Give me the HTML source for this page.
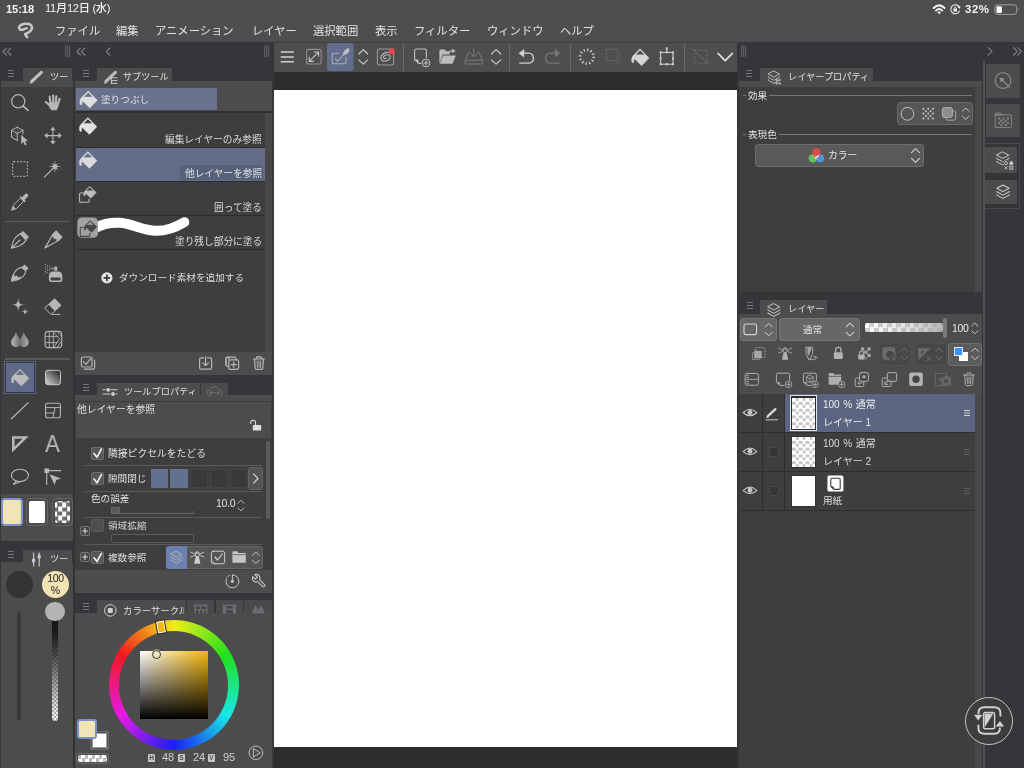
<!DOCTYPE html>
<html lang="ja">
<head>
<meta charset="utf-8">
<title>CLIP STUDIO PAINT</title>
<style>
*{box-sizing:border-box;margin:0;padding:0}
html,body{width:1024px;height:768px;overflow:hidden}
body{background:#35363a;font-family:"Liberation Sans","Noto Sans CJK JP",sans-serif;color:#d6d6d6;font-size:11px;position:relative}
.a{position:absolute}
.t{position:absolute;white-space:nowrap;line-height:1;will-change:transform}
svg{position:absolute;overflow:visible}
.pc{background:#3e3e3e}
.pl{background:#4c4c4c}
.tab{position:absolute;background:#4c4c4c;height:14px}
.hm{position:absolute;width:6px;height:7px;border-top:1px solid #77787b;border-bottom:1px solid #77787b}
.hm:after{content:"";position:absolute;left:0;right:0;top:2px;border-top:1px solid #77787b}
.cb{position:absolute;width:13px;height:13px;background:#575757;border:1px solid #6e6e6e;border-radius:2px}
.sep{position:absolute;height:1px;background:#5a5a5a}
.ic{stroke:#b6b6b6;fill:none;stroke-width:1.2;stroke-linecap:round;stroke-linejoin:round}
.fi{fill:#b6b6b6;stroke:none}
.bk{fill:var(--bk,#3e3e3e);stroke:none}
</style>
</head>
<body>
<!-- TOP BARS -->
<div class="a" id="topbar" style="left:0;top:0;width:1024px;height:42px;background:#4e4e4e"></div>
<div class="t" style="left:6px;top:3.5px;font-size:11.2px;color:#f2f2f2;font-weight:bold;letter-spacing:-0.1px">15:18</div>
<div class="t" style="left:45px;top:2.5px;font-size:11.2px;color:#f2f2f2;font-weight:500;letter-spacing:-0.3px">11月12日 (水)</div>
<div class="t" style="left:965.4px;top:3.6px;font-size:11.4px;color:#f2f2f2;font-weight:bold;letter-spacing:0.6px">32%</div>
<!-- menu -->
<div class="t" style="left:55px;top:25.5px;font-size:11.3px;color:#e2e2e2">ファイル</div>
<div class="t" style="left:116px;top:25.5px;font-size:11.3px;color:#e2e2e2">編集</div>
<div class="t" style="left:155px;top:25.5px;font-size:11.3px;color:#e2e2e2">アニメーション</div>
<div class="t" style="left:252px;top:25.5px;font-size:11.3px;color:#e2e2e2">レイヤー</div>
<div class="t" style="left:313px;top:25.5px;font-size:11.3px;color:#e2e2e2">選択範囲</div>
<div class="t" style="left:375px;top:25.5px;font-size:11.3px;color:#e2e2e2">表示</div>
<div class="t" style="left:414px;top:25.5px;font-size:11.3px;color:#e2e2e2">フィルター</div>
<div class="t" style="left:487px;top:25.5px;font-size:11.3px;color:#e2e2e2">ウィンドウ</div>
<div class="t" style="left:560px;top:25.5px;font-size:11.3px;color:#e2e2e2">ヘルプ</div>


<!-- chrome: hamburgers, chevrons, grips, tab icons -->
<div class="hm" style="left:8px;top:69.5px"></div>
<div class="hm" style="left:82.5px;top:69.5px"></div>
<div class="hm" style="left:82.5px;top:384px"></div>
<div class="hm" style="left:82.5px;top:602.5px"></div>
<div class="hm" style="left:8px;top:551px"></div>
<div class="hm" style="left:746px;top:69.5px"></div>
<div class="hm" style="left:746.5px;top:301.5px"></div>
<svg id="ic-chrome" width="1024" height="768" viewBox="0 0 1024 768" style="left:0;top:0;z-index:5;pointer-events:none">
<g fill="none" stroke="#808184" stroke-width="1.2" stroke-linecap="round" stroke-linejoin="round">
<path d="M6.4,48.2 L3,51.6 L6.4,55 M10.8,48.2 L7.4,51.6 L10.8,55"/>
<path d="M80.4,48.2 L77,51.6 L80.4,55 M84.8,48.2 L81.4,51.6 L84.8,55"/>
<path d="M109.8,48 L106.4,51.6 L109.8,55.2"/>
<path d="M988.2,47.6 L992,51.4 L988.2,55.2"/>
<path d="M1013.6,47.6 L1017.2,51.4 L1013.6,55.2 M1017.8,47.6 L1021.4,51.4 L1017.8,55.2"/>
</g>
<g fill="#5c5d61">
<rect x="65" y="45.5" width="1.2" height="11.5"/><rect x="67" y="45.5" width="1.2" height="11.5"/><rect x="69" y="45.5" width="1.2" height="11.5"/>
<rect x="264" y="45.5" width="1.2" height="11.5"/><rect x="266" y="45.5" width="1.2" height="11.5"/><rect x="268" y="45.5" width="1.2" height="11.5"/>
<rect x="741" y="45.5" width="1.2" height="11.5"/><rect x="743" y="45.5" width="1.2" height="11.5"/><rect x="745" y="45.5" width="1.2" height="11.5"/>
</g>
<!-- tool tab pencil -->
<path d="M32,81.2 L41.4,72.4" stroke="#c2c2c2" stroke-width="3" stroke-linecap="round" fill="none"/>
<path d="M29.8,83.8 L30.6,80.6 L33,83 Z" fill="#c2c2c2"/>
<!-- subtool tab pencil + list -->
<path d="M106.2,81.2 L115.4,72.4" stroke="#bcbcbc" stroke-width="3" stroke-linecap="round" fill="none"/>
<path d="M104,83.8 L104.8,80.6 L107.2,83 Z" fill="#bcbcbc"/>
<path d="M111,77.8 L117.4,77.8 M111,80.6 L117.4,80.6 M111,83.4 L117.4,83.4 M111.4,77.4 L111.4,83.8" stroke="#c8c8c8" stroke-width="1" fill="none"/>
</svg>

<!-- CANVAS AREA -->
<div class="a" id="cvbg" style="left:274px;top:42px;width:463px;height:726px;background:#2d2d2d"></div>
<div class="a" id="toolbar" style="left:274px;top:43px;width:463px;height:28.5px;background:#4e4e4e"></div>
<div class="a" style="left:274px;top:41.5px;width:463px;height:1.5px;background:#3f3f3f"></div>
<div class="a" id="canvas" style="left:274px;top:89.5px;width:463px;height:657.3px;background:#fff"></div>
<svg id="ic-tb" width="1024" height="80" viewBox="0 0 1024 80" style="left:0;top:0">
<rect x="327" y="43" width="26.6" height="28" rx="3" fill="#616d8c"/>
<g fill="#6a6a6a"><rect x="403" y="44" width="1" height="27"/><rect x="509" y="44" width="1" height="27"/><rect x="570" y="44" width="1" height="27"/><rect x="684" y="44" width="1" height="27"/></g>
<!-- hamburger -->
<path d="M280.8,52 L293.8,52 M280.8,56.9 L293.8,56.9 M280.8,61.8 L293.8,61.8" stroke="#d2d2d2" stroke-width="1.5" fill="none"/>
<!-- expand -->
<rect x="306.6" y="49.4" width="14.6" height="14.6" rx="2" fill="none" stroke="#8e8e8e" stroke-width="1.1"/>
<path d="M309.4,61.2 L318.4,52.2 M314.4,52 L318.6,52 L318.6,56.2 M309.2,57.2 L309.2,61.4 L313.4,61.4" fill="none" stroke="#c4c4c4" stroke-width="1.1" stroke-linecap="round" stroke-linejoin="round"/>
<!-- selected: pen in box -->
<path d="M339,53.2 L333.6,53.2 Q332.2,53.2 332.2,54.6 L332.2,62.4 Q332.2,63.8 333.6,63.8 L344.6,63.8 Q346,63.8 346,62.4 L346,57.4" fill="none" stroke="#a9adb9" stroke-width="1.1" stroke-linecap="round"/>
<path d="M340,58.6 L343,54.2 Q343.4,51.4 345.4,49.6 Q347.6,47.8 349.2,48.6 Q350.2,50.2 348.6,52.4 Q346.8,54.4 344.2,55 Z" fill="#bdbfc6"/>
<path d="M340.6,57.6 Q338.8,61.4 337,61.2 Q335.4,61 335.8,58.8" fill="none" stroke="#bdbfc6" stroke-width="1" stroke-linecap="round"/>
<!-- chevrons up/down -->
<g fill="none" stroke="#cfcfcf" stroke-width="1.1" stroke-linecap="round" stroke-linejoin="round">
<path d="M358.8,54 L363.3,49.6 L367.8,54 M358.8,59.8 L363.3,64.2 L367.8,59.8"/>
<path d="M491.4,54 L496.1,49.6 L500.8,54 M491.4,59.8 L496.1,64.2 L500.8,59.8"/>
</g>
<!-- clip studio -->
<rect x="377.4" y="49" width="16.2" height="16" rx="2.2" fill="none" stroke="#9a9a9a" stroke-width="1.1"/>
<path d="M386.2,58.2 Q383.6,59 383.4,57.4 Q383.4,55.6 386.6,54.8 Q390,54.4 390.2,56.8 Q390.2,59.8 386,61 Q381.2,61.8 380.8,58 Q380.8,54 386.4,52.4 Q389.4,52 390.6,53" fill="none" stroke="#b4b4b4" stroke-width="1.1" stroke-linecap="round"/>
<circle cx="391.8" cy="51.2" r="2.9" fill="#f0464b"/>
<!-- new doc -->
<path d="M421,63.4 L418.6,63.4 L414.6,59.6 L414.6,50.6 Q414.6,49 416.2,49 L424.8,49 Q426.4,49 426.4,50.6 L426.4,57.6" fill="none" stroke="#c0c0c0" stroke-width="1.1" stroke-linecap="round" stroke-linejoin="round"/>
<path d="M414.8,59.6 L418.4,59.6 L418.4,63.2 Z" fill="#c0c0c0"/>
<circle cx="426" cy="63" r="3.9" fill="#4e4e4e" stroke="#c0c0c0" stroke-width="1"/>
<path d="M423.6,63 L428.4,63 M426,60.6 L426,65.4" stroke="#c0c0c0" stroke-width="1.1" fill="none"/>
<!-- open folder -->
<path d="M439.4,63.8 L439.4,50.4 Q439.4,49.4 440.4,49.4 L444.6,49.4 L446,51.2 L449.6,51.2 L449.6,54.6 L442.6,54.6 Z" fill="#bdbdbd"/>
<path d="M443,55.4 L455.8,55.4 L452.6,63.8 L439.8,63.8 Z" fill="#bdbdbd"/>
<path d="M448.2,54 Q448.8,50.6 452.4,50.8" fill="none" stroke="#bdbdbd" stroke-width="1.2"/>
<path d="M452.2,48.6 L455.6,50.9 L452.2,53.2 Z" fill="#bdbdbd"/>
<!-- save (dim) -->
<g fill="none" stroke="#7b7b7b" stroke-width="1" stroke-linecap="round" stroke-linejoin="round">
<path d="M470.4,52.4 L468.6,52.4 L465.2,60.2 L465.2,63.2 Q465.2,64 466,64 L481.6,64 Q482.4,64 482.4,63.2 L482.4,60.2 L479,52.4 L477.2,52.4"/>
<path d="M465.4,60.2 L482.2,60.2 M473.8,48.6 L473.8,56.6 M471.2,54.2 L473.8,56.8 L476.4,54.2"/>
</g>
<!-- undo -->
<path d="M523.6,53.2 L528.4,53.2 Q533.4,53.4 533.4,58.2 Q533.4,63 528.4,63.2 L519.8,63.2" fill="none" stroke="#cfcfcf" stroke-width="1.3" stroke-linecap="round"/>
<path d="M518.6,53.2 L524.2,49 L524.2,57.4 Z" fill="#cfcfcf"/>
<!-- redo dim -->
<path d="M555.4,53.2 L550.6,53.2 Q545.6,53.4 545.6,58.2 Q545.6,63 550.6,63.2 L559.2,63.2" fill="none" stroke="#767676" stroke-width="1.3" stroke-linecap="round"/>
<path d="M560.4,53.2 L554.8,49 L554.8,57.4 Z" fill="#767676"/>
<!-- spinner -->
<circle cx="586.9" cy="56.7" r="6.8" fill="none" stroke="#d0d0d0" stroke-width="2.6" stroke-dasharray="1.3 2.26"/>
<!-- dashed rect w rays (dim) -->
<rect x="606.2" y="49.2" width="11.4" height="11.6" fill="none" stroke="#757575" stroke-width="1" stroke-dasharray="1.6 1.3"/>
<path d="M613,63 L612.4,65 M616,62.6 L616.8,64.6 M618.6,61 L620.2,62.4 M619.6,58 L621.4,58.4 M619,54.8 L620.6,54" fill="none" stroke="#6c6c6c" stroke-width="0.9"/>
<!-- bucket -->
<use href="#bucket" x="630.8" y="47.8" width="20" height="20" style="color:#d6d6d6"/>
<!-- transform -->
<rect x="660.6" y="52.4" width="12.4" height="11.8" fill="none" stroke="#cdcdcd" stroke-width="1.1"/>
<path d="M666.8,48.4 L666.8,52.4" stroke="#cdcdcd" stroke-width="1" fill="none"/>
<g fill="#cdcdcd"><rect x="659.6" y="51.4" width="2" height="2"/><rect x="672" y="51.4" width="2" height="2"/><rect x="659.6" y="63.2" width="2" height="2"/><rect x="672" y="63.2" width="2" height="2"/><rect x="665.8" y="51.4" width="2" height="2"/><rect x="665.8" y="63.2" width="2" height="2"/><rect x="659.6" y="57.3" width="2" height="2"/><rect x="672" y="57.3" width="2" height="2"/><rect x="665.7" y="47.4" width="2.2" height="2.2"/></g>
<!-- deselect dim -->
<rect x="694.4" y="50.4" width="13" height="13" fill="none" stroke="#6e6e6e" stroke-width="1" stroke-dasharray="1.8 1.6"/>
<path d="M692.6,48.6 L709.4,65" stroke="#6e6e6e" stroke-width="1" fill="none"/>
<!-- big chevron -->
<path d="M718,53.4 L725.2,60.6 L732.4,53.4" fill="none" stroke="#e2e2e2" stroke-width="1.6" stroke-linecap="round" stroke-linejoin="round"/>
</svg>

<div class="a" style="left:73px;top:87px;width:2px;height:681px;background:#333"></div>
<div class="a" style="left:272px;top:87px;width:2px;height:681px;background:#383838"></div>
<!-- LEFT: TOOL PANEL -->
<div id="toolpanel">
<div class="a pl" style="left:1px;top:81px;width:72px;height:6px"></div>
<div class="tab" style="left:23px;top:68px;width:49px"></div>
<div class="a pc" style="left:1px;top:87px;width:72px;height:407px"></div>
<div class="a pl" style="left:1px;top:494px;width:72px;height:47px"></div>
<div class="tab" style="left:23px;top:550px;width:49px;height:13px"></div>
<div class="a pl" style="left:1px;top:562px;width:72px;height:206px"></div>

<!-- tool panel contents -->
<div class="t" style="left:50px;top:70.2px;padding-top:3px;font-size:9.2px;color:#e0e0e0;width:18.5px;overflow:hidden">ツール</div>
<div class="t" style="left:50px;top:552px;padding-top:3px;font-size:9.2px;color:#e0e0e0;width:18.5px;overflow:hidden">ツール</div>
<div class="a" style="left:5px;top:220.5px;width:65px;height:1.5px;background:#5a5a5a"></div>
<div class="a" style="left:5px;top:358px;width:65px;height:1.5px;background:#5a5a5a"></div>
<div class="a" style="left:4px;top:361px;width:32.2px;height:32.5px;background:#5e6a87;border:1px solid #55637f;box-shadow:inset 0 0 0 0.9px #31343e"></div>
<div class="a" style="left:1.3px;top:498px;width:21.4px;height:28px;background:#f3e4b5;border:2.4px solid #7b92cc;border-radius:4px"></div>
<div class="a" style="left:26px;top:498px;width:22px;height:28px;border:1px solid #646464;border-radius:4px"></div><div class="a" style="left:28.6px;top:500.8px;width:16.9px;height:22.4px;background:#fff;border-radius:1.5px"></div>
<div class="a" style="left:51.6px;top:498px;width:21.2px;height:28px;border:1px solid #646464;border-radius:4px"></div>
<div class="a" style="left:54.6px;top:500.8px;width:15.4px;height:22.4px;border-radius:2px;background:conic-gradient(#6c6c6c 90deg,#fff 90deg 180deg,#6c6c6c 180deg 270deg,#fff 270deg) -1.8px 1.5px/9px 9px"></div>
<div class="a" style="left:5.5px;top:570.5px;width:27px;height:27px;border-radius:50%;background:#333"></div>
<div class="a" style="left:41.5px;top:570.5px;width:27px;height:27px;border-radius:50%;background:#f3e4b5"></div>
<div class="t" style="left:41.5px;top:573px;width:27px;text-align:center;font-size:10.5px;color:#222;letter-spacing:-0.3px">100</div>
<div class="t" style="left:41.5px;top:585px;width:27px;text-align:center;font-size:10.5px;color:#222">%</div>
<div class="a" style="left:16.9px;top:611.5px;width:4.2px;height:108.5px;background:#3a3a3a;border-radius:2px"></div>
<div class="a" style="left:51.8px;top:618px;width:6.4px;height:102.8px;border-radius:0 0 3px 3px;background:linear-gradient(to bottom,rgba(22,20,16,1) 0%,rgba(22,20,16,.97) 14%,rgba(28,28,28,.8) 35%,rgba(40,40,40,.5) 60%,rgba(60,60,60,.22) 82%,rgba(80,80,80,.05) 100%),conic-gradient(#fff 90deg,#bdbdbd 90deg 180deg,#fff 180deg 270deg,#bdbdbd 270deg) 0 0/4px 4px"></div>
<div class="a" style="left:45.2px;top:601.7px;width:19.6px;height:19.6px;border-radius:50%;background:#b4b4b4"></div>
<svg id="ic-tools" width="76" height="500" viewBox="0 0 76 500" style="left:0;top:0">
<defs>
<symbol id="bucket" viewBox="0 0 20 20" overflow="visible">
<path d="M9.3,0.9 L18.3,10.3 L10.8,18 L3.6,11 Q2.7,12.6 2.9,14.7 Q1.5,15.5 1,14.2 Q0.1,9.6 2.7,7.4 Z M9.3,2.5 L13.9,7 L4.7,7 Z" fill="currentColor" fill-rule="evenodd" stroke="currentColor" stroke-width="0.4" stroke-linejoin="round"/>
</symbol>
<symbol id="bucketsq" viewBox="0 0 20 20" overflow="visible">
<path d="M10.6,0.4 L17.4,6.8 L12,12.4 L6.6,7.6 Q6,8.8 6.1,10.2 Q5,10.6 4.6,9.6 Q4.2,6.8 5.8,5.2 Z M10.6,1.5 L14.3,5 L6.9,5 Z" fill="currentColor" fill-rule="evenodd" stroke="currentColor" stroke-width="0.3" stroke-linejoin="round"/>
<path d="M4,7.2 L1.6,7.2 Q0.6,7.2 0.6,8.2 L0.6,15.4 Q0.6,16.4 1.6,16.4 L9.2,16.4 Q10.2,16.4 10.2,15.4 L10.2,13.2" fill="none" stroke="currentColor" stroke-width="1.1" stroke-linecap="round"/>
</symbol>
<linearGradient id="gr1" x1="1" y1="0" x2="0" y2="1"><stop offset="0.05" stop-color="#262626"/><stop offset="0.95" stop-color="#cfcfcf"/></linearGradient>
<linearGradient id="gr2" x1="0" y1="0" x2="1" y2="0"><stop offset="0" stop-color="#bdbdbd"/><stop offset="0.5" stop-color="#6e6e6e"/><stop offset="1" stop-color="#b0b0b0"/></linearGradient>
</defs>
<g class="ic">
<!-- magnifier -->
<circle cx="18.2" cy="101.3" r="6.6"/><path d="M23,106 L28,110.4" stroke-width="1.7"/>
<!-- hand -->
<g stroke-width="2.1"><path d="M50.4,103 L49.7,96.6"/><path d="M53.2,102.6 L53.2,95.6"/><path d="M55.9,102.8 L56.3,96.2"/><path d="M57.9,104 L59.6,98.8"/><path d="M49.8,105.6 L45.8,102" stroke-width="2"/></g>
<path class="fi" d="M49.2,102 L58.8,102.4 Q59,107.4 56.6,110.2 L51.4,110.2 Q49,107.8 48.4,104.4 Z"/>
<!-- cube + cursor -->
<path d="M17.3,127.2 L23,130.3 L23,134 M17.3,140.6 L11.5,137.4 L11.5,130.3 L17.3,127.2 M11.5,130.3 L17.3,133.4 L23,130.3 M17.3,133.4 L17.3,140.6" stroke-width="1"/>
<path d="M17.3,127.2 L17.3,133.4 M11.5,137.4 L17.3,133.4" stroke-width="0.5" opacity="0.6"/>
<path class="fi" d="M21.2,134.8 L21.2,144 L23.4,142 L25,145.4 L26.7,144.6 L25.1,141.3 L28,141 Z"/>
<!-- move -->
<path d="M46,135.6 L60,135.6 M52.9,128.6 L52.9,142.6" stroke-width="1.1"/>
<path class="fi" d="M44.2,135.6 L47.6,132.8 L47.6,138.4 Z M61.8,135.6 L58.4,132.8 L58.4,138.4 Z M52.9,126.8 L50.1,130.2 L55.7,130.2 Z M52.9,144.4 L50.1,141 L55.7,141 Z"/>
<!-- dashed rect -->
<rect x="12.6" y="161.5" width="14.8" height="14.8" rx="1" stroke-dasharray="1.7 1.6" stroke-linecap="butt" stroke-width="1.25" stroke="#ababab"/>
<!-- wand -->
<path d="M44.4,177.2 L53,168.4" stroke-width="1.1"/>
<path class="fi" d="M54.90,159.70 L55.55,165.03 L58.58,162.92 L56.47,165.95 L61.80,166.60 L56.47,167.25 L58.58,170.28 L55.55,168.17 L54.90,173.50 L54.25,168.17 L51.22,170.28 L53.33,167.25 L48.00,166.60 L53.33,165.95 L51.22,162.92 L54.25,165.03 Z"/>
<circle class="fi" cx="54.9" cy="166.6" r="2.3"/>
<!-- eyedropper -->
<path d="M11.8,209.8 L13.4,205.2 L20.6,198 L23.8,201.2 L16.6,208.4 Z" stroke-width="1"/>
<path class="fi" d="M11.6,210 L13,206 L15.6,208.6 Z"/>
<path d="M20.6,197.2 L24.8,201.4" stroke-width="1.7"/>
<path d="M23.6,198.2 L26.4,195.4" stroke-width="3.7"/>
<!-- pen nib -->
<path d="M11.5,248.1 Q12.4,241.4 16,237 L20.1,233.7 L26.1,240.1 Q23.4,244.4 18.6,246.2 Z M11.8,247.8 L20,240" stroke-width="1.15"/>
<path class="fi" d="M20.1,233.7 L23,230.9 L29,237.1 L26.1,240.1 Z"/>
<!-- pencil -->
<path d="M44.9,247.9 L53.4,233.6 L56.3,231 L61.9,237.1 L59.2,240 Z" stroke-width="1.1"/>
<path class="fi" d="M53.2,233.8 L56.3,230.9 L62,237.1 L59.2,240.2 L56.8,241.4 L56.2,238.8 L53.8,239.4 L53.4,236.8 L51.2,237.4 Z"/>
<path class="fi" d="M44.7,248.1 L46.6,244.8 L48.2,246.4 Z"/>
<!-- brush -->
<path d="M11.5,281.1 Q12,275 16.4,270.2 Q19,267.6 21.7,267.4 L25.7,270.9 Q25.6,273.6 23,276.4 Q18,281 11.5,281.1 Z" stroke-width="1.15"/>
<path class="fi" d="M11.5,281.1 Q12,277.6 13.6,274.6 L15.6,276.6 L17,275.2 L18.4,277.8 L20.2,276.6 L21.2,278.2 Q16.5,281 11.5,281.1Z"/>
<path class="fi" d="M21.5,267.4 L24.5,264.5 L28.6,268.3 L25.7,271.1 Z"/>
<!-- airbrush -->
<path class="fi" d="M48.9,279.6 L48.9,275.6 Q49.4,271.6 53,271.6 L58.2,271.6 Q61.8,271.6 62.3,275.6 L62.3,279.6 Q62.3,282.1 59.8,282.1 L51.4,282.1 Q48.9,282.1 48.9,279.6 Z"/>
<rect x="50.6" y="277.4" width="10" height="3" rx="0.8" fill="#3e3e3e" stroke="none"/>
<rect class="fi" x="54.4" y="266.4" width="2.8" height="4.4" rx="0.6"/>
<rect class="fi" x="52.2" y="267.6" width="1.4" height="1.8"/>
<g class="fi"><circle cx="45.4" cy="264.4" r=".55"/><circle cx="45.4" cy="266.7" r=".55"/><circle cx="45.4" cy="269" r=".55"/><circle cx="45.4" cy="271.3" r=".55"/><circle cx="45.4" cy="273.4" r=".55"/><circle cx="47.6" cy="265.6" r=".55"/><circle cx="47.6" cy="267.8" r=".55"/><circle cx="47.6" cy="270.1" r=".55"/><circle cx="47.6" cy="272.2" r=".55"/><circle cx="49.8" cy="266.8" r=".55"/><circle cx="49.8" cy="268.9" r=".55"/><circle cx="49.8" cy="270.8" r=".55"/><circle cx="51.4" cy="268.6" r=".5"/></g>
<!-- sparkle -->
<path class="fi" d="M18.20,296.90 C18.55,303.65 19.25,304.35 26.00,304.70 C19.25,305.05 18.55,305.75 18.20,312.50 C17.85,305.75 17.15,305.05 10.40,304.70 C17.15,304.35 17.85,303.65 18.20,296.90 Z"/>
<path class="fi" d="M25.10,307.50 C25.35,310.95 25.85,311.45 29.30,311.70 C25.85,311.95 25.35,312.45 25.10,315.90 C24.85,312.45 24.35,311.95 20.90,311.70 C24.35,311.45 24.85,310.95 25.10,307.50 Z"/>
<!-- eraser -->
<path d="M45.2,307.6 L54.6,298.8 L61,305.4 L51.8,313.8 Q51,314.4 50.2,313.6 L45.2,308.8 Q44.8,308.2 45.2,307.6 Z" stroke-width="1"/>
<path class="fi" d="M48.4,304.6 L54.6,298.8 L61,305.4 L54.8,311 Z"/>
<path d="M52.4,314.4 L60,314.4" stroke-width="1"/>
<!-- blend -->
<path d="M16,332 Q16.6,335 19.4,338.6 Q20.9,340.6 20.9,342.3 A4.9,4.9 0 0 1 11.1,342.3 Q11.1,340.6 12.6,338.6 Q15.4,335 16,332 Z M23.8,332 Q24.4,335 27.2,338.6 Q28.7,340.6 28.7,342.3 A4.9,4.9 0 0 1 18.9,342.3 Q18.9,340.6 20.4,338.6 Q23.2,335 23.8,332 Z" fill="url(#gr2)" stroke="none"/>
<!-- grid balloon -->
<rect x="45.1" y="331.4" width="16.6" height="16.2" rx="3.2" stroke-width="1.1"/>
<path d="M49.3,331.4 L49.3,347.6 M53.3,331.4 L53.3,347.6 M45.1,336.4 L57.4,336.4 M45.1,342.6 L57.4,342.6" stroke-width="0.9"/>
<path d="M53.4,332 L59.6,338.6 L54,347 M57.2,331.6 L61.6,336.4 M61.6,341.2 L57,347.4" stroke-width="0.9"/>
<!-- line -->
<path d="M11.4,418.8 L28.2,402.6" stroke-width="1.2"/>
<!-- frame -->
<rect x="45.6" y="403.3" width="14.8" height="14.4" rx="2" stroke-width="1.1"/>
<path d="M45.6,407.6 L60.4,407.6 M45.6,413 L53.8,413 M55,407.6 L53,417.6" stroke-width="1"/>
<!-- triangle ruler -->
<path class="fi" fill-rule="evenodd" d="M12,436.2 L28.8,436.2 L12,452.6 Z M14.6,438.8 L22.6,438.8 L14.6,446.6 Z"/>
<!-- balloon -->
<ellipse cx="19.9" cy="475.4" rx="8.5" ry="6.2" stroke-width="1.1"/>
<path d="M16,481.2 L13.4,484.4 L19.4,482" stroke-width="1.1"/>
<!-- correct line -->
<rect class="fi" x="44.4" y="468.4" width="4.6" height="4.6"/>
<path d="M49,470.6 L60.7,470.6 M46.7,473 L46.7,484.4" stroke-width="1.1"/>
<path class="fi" d="M49.6,474.2 L61.2,478.4 L56.2,480 L54.6,485 Z"/>
</g>
<!-- gradient tool -->
<rect x="45.5" y="370.3" width="15" height="14.4" rx="2.4" fill="url(#gr1)" stroke="#c8c8c8" stroke-width="1"/>
<!-- bucket in tool panel -->
<use href="#bucket" x="10.6" y="368.1" width="20" height="20" style="color:#bcbcbc"/>
</svg>
<div class="t" style="left:45.4px;top:432.2px;font-size:24px;color:#b8b8b8;transform:scaleX(.93);transform-origin:0 0">A</div>
</div>

<!-- LEFT: SUBTOOL PANEL -->
<div id="subtool">
<div class="a pl" style="left:75px;top:81px;width:197px;height:6px"></div>
<div class="tab" style="left:97px;top:68px;width:75px"></div>
<div class="a pc" style="left:75px;top:87px;width:197px;height:265px"></div>
<div class="a pl" style="left:75px;top:87px;width:197px;height:25px"></div>
<div class="a pl" style="left:75px;top:352px;width:197px;height:23px"></div>

<!-- subtool contents -->
<div class="a" style="left:76px;top:88px;width:141px;height:22px;background:#68728c"></div>
<div class="t" style="left:101px;top:94.5px;font-size:9.6px;color:#e0e0e0">塗りつぶし</div>
<div class="a" style="left:75px;top:111px;width:197px;height:2px;background:#303030"></div>
<div class="a" style="left:265px;top:113px;width:7px;height:239px;background:#484848"></div>
<div class="a" style="left:76px;top:148px;width:189px;height:33px;background:#636d89"></div>
<div class="a" style="left:76px;top:147px;width:189px;height:1px;background:#2c2c2c"></div>
<div class="a" style="left:76px;top:181px;width:189px;height:1px;background:#2c2c2c"></div>
<div class="a" style="left:76px;top:215px;width:189px;height:1px;background:#2c2c2c"></div>
<div class="a" style="left:76px;top:249px;width:189px;height:1px;background:#2c2c2c"></div>
<div class="a" style="left:180px;top:165px;width:83px;height:15px;background:#58617a;border-radius:3px"></div>
<div class="t" style="right:762px;top:134.6px;font-size:9.7px;color:#dcdcdc">編集レイヤーのみ参照</div>
<div class="t" style="right:762px;top:168.6px;font-size:9.7px;color:#e4e4e4">他レイヤーを参照</div>
<div class="t" style="right:762px;top:202.6px;font-size:9.7px;color:#dcdcdc">囲って塗る</div>
<div class="t" style="right:762px;top:236.6px;font-size:9.7px;color:#dcdcdc">塗り残し部分に塗る</div>
<div class="t" style="left:119px;top:273px;font-size:9.65px;color:#dcdcdc">ダウンロード素材を追加する</div>
<div class="t" style="left:123px;top:72.8px;font-size:9.1px;color:#e0e0e0">サブツール</div>

<svg id="ic-sub" width="280" height="420" viewBox="0 0 280 420" style="left:0;top:0">
<use href="#bucket" x="79" y="90" width="20" height="20" style="color:#dedede"/>
<use href="#bucket" x="78.6" y="116.5" width="20" height="20" style="color:#e2e2e2"/>
<use href="#bucket" x="78.6" y="150.5" width="20" height="20" style="color:#dadada"/>
<use href="#bucketsq" x="79" y="185.8" width="20" height="20" style="color:#bebebe"/>
<path d="M96,227.6 C104,223.4 112,222.4 120,222.8 C132,223.6 143,230.4 156,230.8 C168,231 178,226 184.3,222.2" fill="none" stroke="#fff" stroke-width="10" stroke-linecap="round"/>
<rect x="77.4" y="217.5" width="20.6" height="20.2" rx="4.5" fill="#a2a2a2"/>
<use href="#bucketsq" x="79.6" y="220" width="20" height="20" style="color:#454545"/>
<circle cx="106.9" cy="277.9" r="5.6" fill="#e6e6e6"/>
<path d="M103.6,277.9 L110.2,277.9 M106.9,274.6 L106.9,281.2" stroke="#3e3e3e" stroke-width="1.7" fill="none"/>
<g class="ic" stroke-width="1.1">
<!-- checkbox stack -->
<rect x="81.4" y="357" width="10.6" height="10" rx="1.6"/>
<path d="M84.2,369.2 L93,369.2 Q94.6,369.2 94.6,367.6 L94.6,360.2"/>
<path d="M83.4,361.4 L86,364.4 L90.4,359"/>
<!-- import -->
<path d="M203.6,357.8 L201,357.8 Q199.6,357.8 199.6,359.2 L199.6,367.8 Q199.6,369.2 201,369.2 L210.2,369.2 Q211.6,369.2 211.6,367.8 L211.6,359.2 Q211.6,357.8 210.2,357.8 L207.6,357.8"/>
<path d="M205.6,356.6 L205.6,365.4 M202.8,362.8 L205.6,365.6 L208.4,362.8"/>
<!-- duplicate -->
<path d="M229,360 L229,358.6 Q229,357.2 227.6,357.2 Q226,357.2 226,358.8 L226,365 Q226,366.4 227.4,366.4 L228.6,366.4" />
<path d="M226,365 L226,358.6 Q226,357.2 227.4,357.2 L234.4,357.2 Q235.8,357.2 235.8,358.6 L235.8,359.6"/>
<rect x="228.8" y="359.8" width="9.8" height="9.6" rx="1.6"/>
<path d="M231,364.6 L236.4,364.6 M233.7,361.9 L233.7,367.3"/>
<!-- trash -->
<path d="M253.4,359 L264.6,359 M256.6,358.8 L256.6,357.6 Q256.6,356.8 257.4,356.8 L260.6,356.8 Q261.4,356.8 261.4,357.6 L261.4,358.8"/>
<path d="M254.6,359.2 L255.2,368.2 Q255.3,369.4 256.4,369.4 L261.6,369.4 Q262.7,369.4 262.8,368.2 L263.4,359.2"/>
<path d="M257.2,361 L257.4,367.4 M259,361 L259,367.4 M260.8,361 L260.6,367.4" stroke-width="0.9"/>
</g>
</svg>
</div>

<!-- LEFT: TOOL PROPERTY -->
<div id="toolprop">
<div class="tab" style="left:97px;top:383px;width:103px;height:13px"></div>
<div class="tab" style="left:201.4px;top:383px;width:27px;height:13px;background:#494a4c"></div>
<div class="a pl" style="left:75px;top:395px;width:197px;height:7px"></div>
<div class="a pc" style="left:75px;top:402px;width:197px;height:168px"></div>
<div class="a" style="left:75px;top:401px;width:197px;height:1px;background:#3c3c3c"></div>
<div class="a pl" style="left:76px;top:402px;width:195px;height:35.6px"></div>
<div class="a pl" style="left:75px;top:570px;width:197px;height:23px"></div>

<!-- tool property contents -->
<div class="t" style="left:124px;top:385.4px;padding-top:3px;font-size:9.2px;color:#e0e0e0;height:10.3px;overflow:hidden">ツールプロパティ</div>
<div class="t" style="left:77px;top:405px;font-size:9.8px;color:#e0e0e0">他レイヤーを参照</div>
<div class="a" style="left:266px;top:441px;width:4px;height:78px;background:#5c5c5c;border-radius:2px"></div>
<div class="cb" style="left:91px;top:447px"></div>
<div class="t" style="left:108px;top:448.8px;font-size:9.8px;color:#e0e0e0">隣接ピクセルをたどる</div>
<div class="sep" style="left:85px;top:465px;width:177px"></div>
<div class="cb" style="left:91px;top:472px"></div>
<div class="t" style="left:108px;top:474px;font-size:9.6px;color:#e0e0e0">隙間閉じ</div>
<div class="a" style="left:151px;top:469px;width:17px;height:19px;background:#64708f"></div>
<div class="a" style="left:170px;top:469px;width:18px;height:19px;background:#64708f"></div>
<div class="a" style="left:190px;top:469px;width:18px;height:19px;background:#393939;border:1px solid #444"></div>
<div class="a" style="left:210px;top:469px;width:18px;height:19px;background:#393939;border:1px solid #444"></div>
<div class="a" style="left:230px;top:469px;width:17px;height:19px;background:#393939;border:1px solid #444"></div>
<div class="a" style="left:248px;top:467px;width:15px;height:23px;background:#535353;border:1px solid #626262;border-radius:3px"></div>
<div class="sep" style="left:85px;top:491px;width:177px"></div>
<div class="t" style="left:91px;top:494px;font-size:9.6px;color:#e0e0e0">色の誤差</div>
<div class="t" style="left:216px;top:498px;font-size:10.5px;color:#e0e0e0;letter-spacing:-0.3px">10.0</div>
<div class="a" style="left:111px;top:507px;width:9px;height:7px;background:#5a5a5a;border:1px solid #666"></div>
<div class="a" style="left:111px;top:513px;width:83px;height:1px;background:#666"></div>
<div class="a" style="left:193px;top:511px;width:1px;height:3px;background:#666"></div>
<div class="sep" style="left:85px;top:517px;width:177px"></div>
<div class="cb" style="left:91px;top:519px;background:#4e4e4e;border-color:#5a5a5a"></div>
<div class="t" style="left:108px;top:521px;font-size:9.6px;color:#d2d2d2">領域拡縮</div>
<div class="a" style="left:80px;top:526px;width:10px;height:10px;border:1px solid #777;border-radius:2px;background:#444"></div>
<div class="a" style="left:111px;top:534px;width:83px;height:9px;border:1px solid #5c5c5c;border-radius:2px;background:#3a3a3a"></div>
<div class="sep" style="left:85px;top:544px;width:177px"></div>
<div class="a" style="left:80px;top:552px;width:10px;height:10px;border:1px solid #777;border-radius:2px;background:#444"></div>
<div class="cb" style="left:91px;top:551px"></div>
<div class="t" style="left:108px;top:553px;font-size:9.6px;color:#e0e0e0">複数参照</div>
<div class="a" style="left:166px;top:546px;width:97px;height:23px;background:#555;border:1px solid #666;border-radius:3px"></div>
<div class="a" style="left:166px;top:546px;width:21px;height:23px;background:#6c80b4;border-radius:3px 0 0 3px"></div>
</div>

<!-- LEFT: COLOR PANEL -->
<div id="colorpanel">
<div class="tab" style="left:97px;top:600.4px;width:88.6px"></div>
<div class="a pl" style="left:75px;top:613px;width:197px;height:155px"></div>

<!-- color panel contents -->
<div class="tab" style="left:187px;top:600.4px;width:27px;height:13.4px;background:#494a4c"></div>
<div class="tab" style="left:215.8px;top:600.4px;width:26.8px;height:13.4px;background:#494a4c"></div>
<div class="tab" style="left:244px;top:600.4px;width:27.6px;height:13.4px;background:#494a4c"></div>
<div class="t" style="left:123px;top:602.5px;padding-top:3px;font-size:9.4px;color:#e0e0e0;width:60.6px;overflow:hidden;height:13px">カラーサークル</div>
<div class="a" id="wheel" style="left:108.5px;top:620px;width:130px;height:130px;border-radius:50%;background:conic-gradient(from 0deg,#f01820,#f2ee18 60deg,#22e01c 120deg,#18e8e8 180deg,#1a20f2 240deg,#e61ae6 300deg,#f01820 360deg);transform:rotate(-60deg)"></div>
<div class="a" style="left:119px;top:630.5px;width:109px;height:109px;border-radius:50%;background:#4c4c4c"></div>
<div class="a" id="sv" style="left:140px;top:651px;width:68px;height:68px;background:linear-gradient(to bottom,rgba(0,0,0,0),#000),linear-gradient(to right,#fff,#f2b60a)"></div>
<div class="a" style="left:151.5px;top:650px;width:9px;height:9px;border-radius:50%;background:#f3e6b8;border:1px solid #333;box-shadow:0 0 0 0.5px #ddd"></div>
<div class="a" style="left:157.2px;top:620.6px;width:7.6px;height:12px;background:#f2b90c;border:1.3px solid #fff;outline:0.8px solid #2c2c2c;transform:rotate(-10deg)"></div>
<div class="a" style="left:90px;top:731px;width:19px;height:19px;background:#fff;border:1px solid #6a6a6a;border-radius:3px;box-shadow:inset 0 0 0 1.5px #4c4c4c"></div>
<div class="a" style="left:77px;top:719px;width:20px;height:20px;background:#f3e4b5;border:2px solid #7b92cc;border-radius:3px"></div>
<div class="a" style="left:76px;top:753px;width:33px;height:11px;border:1px solid #6a6a6a;border-radius:3px"></div>
<div class="a" id="tchk" style="left:78px;top:755px;width:29px;height:7px;border-radius:2px;background:conic-gradient(#fff 90deg,#bbb 90deg 180deg,#fff 180deg 270deg,#bbb 270deg) 0 0/7px 7px"></div>
<div class="t" style="left:162px;top:752px;font-size:11px;color:#d0d0d0">48</div>
<div class="t" style="left:192.5px;top:752px;font-size:11px;color:#d0d0d0">24</div>
<div class="t" style="left:222.5px;top:752px;font-size:11px;color:#d0d0d0">95</div>
<div class="t" style="left:148px;top:753.5px;font-size:6.5px;font-weight:bold;color:#4c4c4c;background:#c8c8c8;width:7px;height:8px;text-align:center;line-height:8px;border-radius:1px">H</div>
<div class="t" style="left:178px;top:753.5px;font-size:6.5px;font-weight:bold;color:#4c4c4c;background:#c8c8c8;width:7px;height:8px;text-align:center;line-height:8px;border-radius:1px">S</div>
<div class="t" style="left:208px;top:753.5px;font-size:6.5px;font-weight:bold;color:#4c4c4c;background:#c8c8c8;width:7px;height:8px;text-align:center;line-height:8px;border-radius:1px">V</div>
</div>

<!-- RIGHT: LAYER PROPERTY -->
<div id="layerprop">
<div class="tab" style="left:760px;top:68px;width:113px"></div>
<div class="a pl" style="left:739px;top:81px;width:243px;height:6px"></div>
<div class="a pc" style="left:739px;top:87px;width:243px;height:205px"></div>

<!-- layer property contents -->
<div class="t" style="left:788px;top:73.2px;font-size:9.2px;color:#e0e0e0">レイヤープロパティ</div>
<div class="a" style="left:975px;top:87px;width:7px;height:205px;background:#484848"></div>
<div class="a" style="left:743px;top:95px;width:3px;height:1px;background:#777"></div>
<div class="a" style="left:769px;top:95px;width:203px;height:1px;background:#777"></div>
<div class="t" style="left:748px;top:91px;font-size:9.6px;color:#e0e0e0">効果</div>
<div class="a" style="left:743px;top:134px;width:3px;height:1px;background:#777"></div>
<div class="a" style="left:779px;top:134px;width:193px;height:1px;background:#777"></div>
<div class="t" style="left:748px;top:129.5px;font-size:9.6px;color:#e0e0e0">表現色</div>
<div class="a" style="left:897px;top:102px;width:76px;height:23px;background:#555;border:1px solid #686868;border-radius:3px"></div>
<div class="a" style="left:754.8px;top:144.2px;width:169px;height:22.8px;background:#595959;border:1px solid #6c6c6c;border-radius:3px"></div>
<div class="t" style="left:828px;top:150.5px;font-size:9.8px;color:#e6e6e6">カラー</div>
</div>

<!-- RIGHT: LAYER PANEL -->
<div id="layers">
<div class="tab" style="left:760px;top:300px;width:67px"></div>
<div class="a pl" style="left:739px;top:314px;width:243px;height:80px"></div>
<div class="a pc" style="left:739px;top:394px;width:243px;height:374px"></div>

<!-- layer panel contents -->
<div class="t" style="left:788px;top:305.4px;font-size:9.2px;color:#e0e0e0">レイヤー</div>
<div class="a" style="left:975px;top:394px;width:7px;height:374px;background:#484848"></div>
<div class="a" style="left:739.5px;top:318px;width:37px;height:23px;background:#676767;border:1px solid #757575;border-radius:3px"></div>
<div class="a" style="left:779px;top:318px;width:81px;height:23px;background:#676767;border:1px solid #757575;border-radius:3px"></div>
<div class="t" style="left:803px;top:324.5px;font-size:9.6px;color:#e6e6e6">通常</div>
<div class="a" style="left:865px;top:323px;width:78px;height:9px;border-radius:2px;background:linear-gradient(to right,rgba(150,150,150,0) 0%,rgba(165,165,165,.35) 55%,rgba(170,170,170,.85) 100%),conic-gradient(#d0d0d0 90deg,#fff 90deg 180deg,#d0d0d0 180deg 270deg,#fff 270deg) 0 0/9px 9px"></div>
<div class="a" style="left:942.5px;top:318px;width:4px;height:20px;background:#7a7a7a;border-radius:2px"></div>
<div class="t" style="left:952px;top:322.5px;font-size:10.5px;color:#e6e6e6;letter-spacing:-0.3px">100</div>
<div class="a" style="left:878px;top:343px;width:33px;height:23px;background:#474747;border:1px solid #515151;border-radius:3px"></div>
<div class="a" style="left:913.5px;top:343px;width:33px;height:23px;background:#474747;border:1px solid #515151;border-radius:3px"></div>
<div class="a" style="left:948px;top:343px;width:34px;height:23px;background:#5c5c5c;border:1px solid #6e6e6e;border-radius:3px"></div>
<div class="a" style="left:954px;top:347px;width:9px;height:9px;background:#3b93ff;border:1px solid #dfe9f7;z-index:2"></div>
<div class="a" style="left:958.5px;top:351.5px;width:9px;height:9px;background:#fff"></div>
<!-- rows -->
<div class="a" style="left:785px;top:394px;width:190px;height:38px;background:#5b6582"></div>
<div class="a" style="left:739px;top:432px;width:236px;height:1px;background:#2e2e2e"></div>
<div class="a" style="left:739px;top:471px;width:236px;height:1px;background:#2e2e2e"></div>
<div class="a" style="left:739px;top:510px;width:236px;height:1px;background:#2e2e2e"></div>
<div class="a" style="left:762px;top:394px;width:1px;height:117px;background:#2e2e2e"></div>
<div class="a" style="left:784px;top:394px;width:1px;height:117px;background:#2e2e2e"></div>
<div class="a" style="left:789.6px;top:395.4px;width:27.4px;height:35.6px;border:1px solid #e4e6ea;background:#2c2c2c"></div>
<div class="a" style="left:791.8px;top:397.6px;width:23px;height:31.2px;background:conic-gradient(#c6c6c6 90deg,#fff 90deg 180deg,#c6c6c6 180deg 270deg,#fff 270deg) 0 0/6.8px 6.8px"></div>
<div class="a" style="left:792px;top:437px;width:22.6px;height:30.4px;background:conic-gradient(#c6c6c6 90deg,#fff 90deg 180deg,#c6c6c6 180deg 270deg,#fff 270deg) 0 0/6.8px 6.8px;outline:1px solid #333"></div>
<div class="a" style="left:792px;top:476px;width:22.6px;height:30.2px;background:#fff;outline:1px solid #333"></div>
<div class="t" style="left:823px;top:400px;font-size:10px;color:#ececec;word-spacing:0.8px">100 % 通常</div>
<div class="t" style="left:823px;top:417.5px;font-size:10px;color:#ececec">レイヤー 1</div>
<div class="t" style="left:823px;top:439px;font-size:10px;color:#dcdcdc;word-spacing:0.8px">100 % 通常</div>
<div class="t" style="left:823px;top:456.5px;font-size:10px;color:#dcdcdc">レイヤー 2</div>
<div class="t" style="left:823px;top:495.5px;font-size:9.6px;color:#dcdcdc">用紙</div>
<div class="a" style="left:769.2px;top:447px;width:9.8px;height:9.6px;border:1px solid #4b4b4b;border-radius:2px;background:#353535"></div>
<div class="a" style="left:769.2px;top:486px;width:9.8px;height:9.6px;border:1px solid #4b4b4b;border-radius:2px;background:#353535"></div>
</div>
<svg id="ic-right" width="1024" height="768" viewBox="0 0 1024 768" style="left:0;top:0;pointer-events:none">
<defs>
<symbol id="updn" viewBox="0 0 8 14" overflow="visible"><path d="M0.4,4.4 L4,0.8 L7.6,4.4 M0.4,9.6 L4,13.2 L7.6,9.6" fill="none" stroke="currentColor" stroke-width="1" stroke-linecap="round" stroke-linejoin="round"/></symbol>
<symbol id="stack" viewBox="0 0 14 15" overflow="visible"><path d="M7,0.8 L13,4 L7,7.2 L1,4 Z M1,6.8 L1,7.4 L7,10.6 L13,7.4 L13,6.8 M1,10 L1,10.6 L7,13.8 L13,10.6 L13,10" fill="none" stroke="currentColor" stroke-width="1" stroke-linejoin="round" stroke-linecap="round"/></symbol>
<symbol id="pluscirc" viewBox="0 0 8 8" overflow="visible"><circle cx="4" cy="4" r="3.5" fill="#4c4c4c" stroke="currentColor" stroke-width="0.9"/><path d="M1.8,4 L6.2,4 M4,1.8 L4,6.2" stroke="currentColor" stroke-width="1" fill="none"/></symbol>
</defs>
<!-- layer property tab icon -->
<use href="#stack" x="767.4" y="70.4" width="13" height="14" style="color:#c4c4c4"/>
<g fill="#c4c4c4"><circle cx="776.6" cy="80" r="1"/><circle cx="779.6" cy="80" r="1"/><rect x="775.6" y="82.4" width="2" height="2"/><rect x="778.6" y="82.4" width="2" height="2"/></g>
<!-- layer tab icon -->
<use href="#stack" x="767" y="303" width="13.6" height="14.6" style="color:#cacaca"/>
<!-- effect box icons -->
<circle cx="907.5" cy="113.8" r="6.4" fill="none" stroke="#c4c4c4" stroke-width="1"/>
<g fill="#c8c8c8">
<circle cx="923.4" cy="108.8" r="1"/><circle cx="928.2" cy="108.8" r="1"/><circle cx="933" cy="108.8" r="1"/>
<circle cx="925.8" cy="111.2" r="1"/><circle cx="930.6" cy="111.2" r="1"/>
<circle cx="923.4" cy="113.6" r="1"/><circle cx="928.2" cy="113.6" r="1"/><circle cx="933" cy="113.6" r="1"/>
<circle cx="925.8" cy="116" r="1"/><circle cx="930.6" cy="116" r="1"/>
<circle cx="923.4" cy="118.4" r="1"/><circle cx="928.2" cy="118.4" r="1"/><circle cx="933" cy="118.4" r="1"/>
</g>
<rect x="946" y="110.8" width="9.6" height="9.4" rx="2" fill="none" stroke="#a4a6b0" stroke-width="1"/>
<rect x="942.4" y="107.6" width="10" height="9.8" rx="2" fill="#8e8e8e" stroke="#b0b2c0" stroke-width="1"/>
<use href="#updn" x="962" y="107" width="7.4" height="13.4" style="color:#d0d0d0"/>
<!-- color dropdown -->
<use href="#updn" x="911" y="147.8" width="9" height="15.4" style="color:#d0d0d0"/>
<circle cx="812.9" cy="158.2" r="4.3" fill="#5fc35a"/><circle cx="819.9" cy="158.2" r="4.3" fill="#4d94d8"/><circle cx="816.4" cy="152.6" r="4.3" fill="#db4b4b"/>
<path d="M816.4,156.9 Q814.6,156.4 813.6,154.6 Q813,156.8 814,159 Q815.2,157.6 816.4,156.9Z" fill="#c9a24a"/>
<path d="M816.4,156.9 Q818.2,156.4 819.2,154.6 Q819.8,156.8 818.8,159 Q817.6,157.6 816.4,156.9Z" fill="#b06bb0"/>
<path d="M816.4,156.9 Q815.2,157.6 814,159 Q816.4,160.8 818.8,159 Q817.6,157.6 816.4,156.9Z" fill="#5fb9c0"/>
<path d="M814.8,158 L818.4,154.8 L818.8,156 L815.6,158.8Z" fill="#fff"/>
<!-- layer panel row1 -->
<rect x="744" y="324" width="12.6" height="10.6" rx="2" fill="none" stroke="#d4d4d4" stroke-width="1.1"/>
<use href="#updn" x="764.8" y="322.4" width="8" height="14.4" style="color:#cfcfcf"/>
<use href="#updn" x="845.6" y="322.4" width="8.6" height="14.4" style="color:#cfcfcf"/>
<use href="#updn" x="971" y="322.2" width="7.6" height="12.4" style="color:#cfcfcf"/>
<!-- row 2 -->
<g fill="none" stroke="#a6a6a6" stroke-width="1" stroke-linejoin="round" stroke-linecap="round">
<rect x="755.2" y="347.6" width="9.8" height="9.8" rx="1" stroke-dasharray="1.6 1.2" stroke-linecap="butt"/>
<path d="M754,352.6 L752.6,352.6 L752.6,359.4 L760,359.4 L760,358.4" stroke="#8a8a8a"/>
<rect x="754.2" y="350.8" width="7.6" height="7.4" rx="1" fill="#a6a6a6" stroke="none"/>
<!-- lighthouse -->
<path d="M783.4,353 L782,359.8 L788.2,359.8 L786.8,353 Z" fill="#b0b0b0" stroke="none"/>
<rect x="783.2" y="349" width="3.8" height="3.4" rx="0.6" fill="none"/>
<path d="M783.6,348.8 L785.1,347.2 L786.6,348.8" />
<path d="M782.6,350 L778.6,348.2 M782.6,351.4 L778.6,353 M787.6,350 L791.6,348.2 M787.6,351.4 L791.6,353" stroke-width="0.9"/>
<!-- draft pen -->
<path d="M806.2,347.2 L812.6,347.2 L812.6,353.6 L810.4,358.8 L808.4,358.8 L806.2,353.6 Z" />
<path d="M807.4,347.6 L807.4,352.6 L809.4,357 L809.4,353.4 L810.6,351.6 L811.6,347.6" fill="#a6a6a6" stroke="none"/>
<path d="M808.6,359.6 L814.4,359.6 Q816.4,359.6 815.8,357.6 Q815.4,356.4 813.4,356.8 M817.6,358 Q816.6,355.8 814.6,356.4" stroke-width="0.9"/>
<!-- lock -->
<rect x="833.8" y="352.2" width="9" height="6.8" rx="1.2" fill="#b2b2b2" stroke="none"/>
<path d="M835.6,352 L835.6,350 Q835.6,347.4 838.3,347.4 Q841,347.4 841,350 L841,352" stroke="#b2b2b2" stroke-width="1.3"/>
<!-- lock transparent -->
<rect x="858.2" y="354.4" width="6.6" height="5" rx="0.8" fill="#b2b2b2" stroke="none"/>
<path d="M859.6,354.2 L859.6,352.8 Q859.6,351 861.5,351 Q863.4,351 863.4,352.8 L863.4,354.2" stroke="#b2b2b2" stroke-width="1.1"/>
</g>
<g fill="#a8a8a8"><rect x="861" y="347.4" width="3.2" height="3.2"/><rect x="867.4" y="347.4" width="3.2" height="3.2"/><rect x="864.2" y="350.6" width="3.2" height="3.2"/><rect x="867.4" y="353.8" width="3.2" height="3.2"/><rect x="864.6" y="357" width="2.8" height="2.6" fill="#777"/></g>
<!-- dim buttons icons -->
<g fill="none" stroke="#6c6c6c" stroke-width="1" stroke-linecap="round" stroke-linejoin="round">
<path d="M894.6,355 L894.6,349.2 Q894.6,347.8 893.2,347.8 L884.6,347.8 Q883.2,347.8 883.2,349.2 L883.2,357.6 Q883.2,359 884.6,359 L889.6,359" stroke-width="1.4"/>
<path d="M884,348.6 L894,348.6 L894,353 Q891.6,350.4 888.6,351 Q885.8,352.2 886.2,355.2 Q886.8,357.6 889.4,358.2 L884,358.2 Z" fill="#6c6c6c" stroke="none"/>
<path d="M891.4,356 L896.4,361 M896.4,356 L891.4,361"/>
<path d="M918.6,348.4 L930.2,348.4 L918.6,359.6 Z M921,350.8 L924.8,350.8 L921,354.4 Z" fill="#6c6c6c" fill-rule="evenodd" stroke-width="0.6"/>
<path d="M926.4,356 L931.4,361 M931.4,356 L926.4,361"/>
</g>
<use href="#updn" x="900.2" y="347.4" width="8.2" height="13" style="color:#717171"/>
<use href="#updn" x="935" y="347.4" width="8.2" height="13" style="color:#717171"/>
<use href="#updn" x="971.2" y="347.4" width="7.6" height="13" style="color:#d0d0d0"/>
<!-- row 3 -->
<g fill="none" stroke="#aeaeae" stroke-width="1" stroke-linecap="round" stroke-linejoin="round">
<rect x="745.2" y="373.4" width="13.2" height="11.8" rx="1.8"/>
<path d="M745.2,379.3 L758.4,379.3 M747,375.6 L748.6,375.6 M747,377.4 L748.6,377.4 M747,381.4 L748.6,381.4 M747,383.2 L748.6,383.2" stroke-width="0.9"/>
<!-- new raster -->
<path d="M784,385.4 L780,385.4 L776.4,382 L776.4,374.6 Q776.4,373.2 777.8,373.2 L788.2,373.2 Q789.6,373.2 789.6,374.6 L789.6,380"/>
<path d="M776.6,382 L779.8,382 L779.8,385.2 Z" fill="#aeaeae" stroke="none"/>
<!-- new vector -->
<path d="M810.6,385.4 L807,385.4 L803.4,382 L803.4,374.6 Q803.4,373.2 804.8,373.2 L815,373.2 Q816.4,373.2 816.4,374.6 L816.4,380"/>
<path d="M803.6,382 L806.8,382 L806.8,385.2 Z" fill="#aeaeae" stroke="none"/>
<path d="M809.9,375.2 L813.2,377 L813.2,380.8 L809.9,382.6 L806.6,380.8 L806.6,377 Z M806.8,377.1 L809.9,378.8 L813,377.1 M809.9,378.8 L809.9,382.4" stroke-width="0.8"/>
<!-- folder -->
<path d="M828.6,384.8 L828.6,373.8 Q828.6,373 829.4,373 L833.2,373 L834.6,374.6 L840.4,374.6 Q841.2,374.6 841.2,375.4 L841.2,380 L838,384.8 Z" fill="#aeaeae" stroke="none"/>
<path d="M829,376.4 L840.8,376.4" stroke="#4c4c4c" stroke-width="0.7"/>
<!-- transfer down -->
<rect x="859.6" y="372.6" width="8.8" height="8.8" rx="1.6"/>
<rect x="862.6" y="375.4" width="2.8" height="2.8" fill="#aeaeae" stroke="none"/>
<path d="M859.4,378 L856.6,378 Q855.2,378 855.2,379.4 L855.2,385.2 Q855.2,386.6 856.6,386.6 L862.4,386.6 Q863.8,386.6 863.8,385.2 L863.8,381.6"/>
<path d="M862,383.2 L858,383.2 M859.6,381.6 L857.8,383.2 L859.6,384.8" stroke-width="0.9"/>
<!-- merge -->
<rect x="887.2" y="372.6" width="9.4" height="8.8" rx="1.6"/>
<path d="M887,378 L883.6,378 Q882.2,378 882.2,379.4 L882.2,385.2 Q882.2,386.6 883.6,386.6 L889.8,386.6 Q891.2,386.6 891.2,385.2 L891.2,381.6"/>
<path d="M889.6,379.6 L885,384.2 M885,381.4 L885,384.4 L888,384.4" stroke-width="1"/>
<!-- trash -->
<path d="M963.6,375 L974.4,375 M966.8,374.8 L966.8,373.6 Q966.8,372.8 967.6,372.8 L970.4,372.8 Q971.2,372.8 971.2,373.6 L971.2,374.8"/>
<path d="M964.8,375.2 L965.4,384.4 Q965.5,385.6 966.6,385.6 L971.4,385.6 Q972.5,385.6 972.6,384.4 L973.2,375.2"/>
<path d="M967.2,377 L967.4,383.6 M969,377 L969,383.6 M970.8,377 L970.6,383.6" stroke-width="0.9"/>
</g>
<use href="#pluscirc" x="784.8" y="380.6" width="7.6" height="7.6" style="color:#aeaeae"/>
<use href="#pluscirc" x="811.2" y="380.6" width="7.6" height="7.6" style="color:#aeaeae"/>
<use href="#pluscirc" x="837.8" y="380.6" width="7.6" height="7.6" style="color:#aeaeae"/>
<!-- mask -->
<rect x="909.2" y="372.6" width="13.6" height="13.4" rx="2" fill="#b4b4b4"/><circle cx="916" cy="379.3" r="3.7" fill="#444"/>
<!-- camera dim -->
<g fill="none" stroke="#666" stroke-width="1"><rect x="935.4" y="373.4" width="11" height="12.4"/><path d="M937.6,379.4 L941,379.4 M939.3,377.7 L939.3,381.1"/></g>
<path d="M941.2,377.2 L944,377.2 L945,375.8 L948.6,375.8 L949.6,377.2 L951,377.2 L951,385.6 L941.2,385.6 Z" fill="#676767"/><circle cx="946.2" cy="381.2" r="2.2" fill="#4c4c4c"/>
</svg>

<!-- RIGHT DOCK -->
<div id="rdock">
<div class="a" style="left:982.6px;top:60px;width:2px;height:708px;background:#505155"></div>

<div class="a" style="left:986px;top:64px;width:34px;height:33.5px;background:#4c4c4c"></div>
<div class="a" style="left:986px;top:103.5px;width:34px;height:33.5px;background:#4c4c4c"></div>
<div class="a" style="left:984px;top:143px;width:36px;height:66px;border:1px solid #48494d;border-left:none"></div>
<div class="a" style="left:984.6px;top:147.3px;width:32px;height:25.4px;background:#4c4c4c;border-radius:0 3px 3px 0"></div>
<div class="a" style="left:984.6px;top:180px;width:32px;height:24.4px;background:#4c4c4c;border-radius:0 3px 3px 0"></div>
<div class="a" style="left:965.1px;top:696.5px;width:48px;height:48px;border-radius:50%;background:rgba(61,61,62,.9);border:1.5px solid #c4c4c4"></div>
</div>
<svg id="ic-right2" width="1024" height="768" viewBox="0 0 1024 768" style="left:0;top:0;pointer-events:none">
<defs>
<symbol id="eye" viewBox="0 0 16 8" overflow="visible"><path d="M0.8,4.4 Q8,-3 15.2,4.4 Q8,10.6 0.8,4.4Z" fill="none" stroke="#c4c4c4" stroke-width="1.25" stroke-linejoin="round"/><circle cx="8" cy="4.1" r="2.6" fill="#c4c4c4"/></symbol>
<symbol id="grip3" viewBox="0 0 6 6" overflow="visible"><path d="M0,0.5 L6,0.5 M0,3 L6,3 M0,5.5 L6,5.5" stroke="currentColor" stroke-width="1" fill="none"/></symbol>
</defs>
<use href="#eye" x="742.4" y="408.6" width="15.2" height="7.6"/>
<use href="#eye" x="742.4" y="447.4" width="15.2" height="7.6"/>
<use href="#eye" x="742.4" y="486.4" width="15.2" height="7.6"/>
<!-- pen -->
<path d="M768.4,415.6 L775.4,409.2" stroke="#d8d8d8" stroke-width="2.4" stroke-linecap="round" fill="none"/>
<path d="M766.2,418 L767,415 L769.4,417.2 Z" fill="#d8d8d8"/>
<path d="M765.6,419.8 L778,419.8" stroke="#d8d8d8" stroke-width="0.9" fill="none"/>
<use href="#grip3" x="964" y="410" width="6" height="6" style="color:#d4d4d4"/>
<use href="#grip3" x="964" y="449" width="6" height="6" style="color:#5e5e5e"/>
<use href="#grip3" x="964" y="488" width="6" height="6" style="color:#5e5e5e"/>
<!-- paper icon -->
<rect x="827.4" y="475.6" width="16" height="16" rx="1.5" fill="#fff"/>
<path d="M833.8,489.4 L839,489.4 Q840.2,489.4 840.2,488.2 L840.2,479.4 Q840.2,478.2 839,478.2 L832,478.2 Q830.8,478.2 830.8,479.4 L830.8,486.4 Z" fill="none" stroke="#3a3a3a" stroke-width="1.1" stroke-linejoin="round"/>
<path d="M830.8,486.4 L833.8,486.4 L833.8,489.4 Z" fill="#3a3a3a"/>
<!-- dock icons -->
<circle cx="1003" cy="80.6" r="7.8" fill="none" stroke="#8e8e8e" stroke-width="1.1"/>
<path d="M1009.8,87.6 L1001.6,79.4" stroke="#8e8e8e" stroke-width="1.3" fill="none"/>
<path d="M999.6,77.4 L1004.6,78.4 L1000.6,82.4 Z" fill="#8e8e8e"/>
<g fill="none" stroke="#858585" stroke-width="1" stroke-linejoin="round">
<path d="M995.2,127.4 L995.2,113.8 Q995.2,113 996,113 L1000.6,113 L1002,114.8 L1010.6,114.8 Q1011.4,114.8 1011.4,115.6 L1011.4,126.6 Q1011.4,127.4 1010.6,127.4 Z"/>
<path d="M995.2,114.9 L1001.8,114.9" stroke-width="1.6"/>
</g>
<g fill="#7e7e7e"><rect x="998" y="117.4" width="2.2" height="2.2"/><rect x="1002.4" y="117.4" width="2.2" height="2.2"/><rect x="1006.8" y="117.4" width="2.2" height="2.2"/><rect x="1000.2" y="119.6" width="2.2" height="2.2"/><rect x="1004.6" y="119.6" width="2.2" height="2.2"/><rect x="998" y="121.8" width="2.2" height="2.2"/><rect x="1002.4" y="121.8" width="2.2" height="2.2"/><rect x="1006.8" y="121.8" width="2.2" height="2.2"/><rect x="1000.2" y="124" width="2.2" height="2"/><rect x="1004.6" y="124" width="2.2" height="2"/></g>
<use href="#stack" x="995.8" y="151.2" width="14" height="15" style="color:#c8c8c8"/>
<rect x="1003.6" y="160.6" width="10" height="10" fill="#4e4e4e"/>
<g fill="none" stroke="#c8c8c8" stroke-width="0.9"><circle cx="1006" cy="163.2" r="1.5"/><rect x="1009.8" y="166.2" width="3" height="3"/><path d="M1004.6,166.4 L1007.4,169.2 M1007.4,166.4 L1004.6,169.2"/></g><circle cx="1011.3" cy="163.2" r="1.9" fill="#c8c8c8"/>
<use href="#stack" x="995.8" y="183.2" width="14.4" height="17.4" style="color:#cdcdcd"/>
<!-- rotate button -->
<g fill="none" stroke="#d2d2d2" stroke-linecap="butt" stroke-linejoin="round">
<path d="M978.4,714 L978.4,713 Q978.4,707.2 984.6,707.2 L994.2,707.2 Q1000.4,707.2 1000.4,713 L1000.4,716.4 M1000,727.6 Q1000,733.8 994.2,733.8 L984.6,733.8 Q978.4,733.8 978.4,728 L978.4,724.8" stroke-width="1.9"/>
<rect x="983.6" y="712.4" width="11" height="16.4" rx="1.8" stroke-width="1.4"/>
</g>
<path d="M974,714.8 L982.4,714.8 L978.2,720.4 Z M995.6,726.6 L1004.2,726.6 L999.9,721 Z" fill="#d2d2d2"/>
<path d="M984.6,713.4 L993.4,713.4 L984.6,727.6 Z" fill="#d2d2d2"/>
</svg>
<svg id="ic-tp" width="280" height="768" viewBox="0 0 280 768" style="left:0;top:0;pointer-events:none;z-index:4">
<defs>
<symbol id="chk" viewBox="0 0 13 13" overflow="visible"><path d="M2.8,6.8 L5.8,10.6 L10.2,2.4" fill="none" stroke="#f4f4f4" stroke-width="1.6" stroke-linecap="round" stroke-linejoin="round"/></symbol>
<symbol id="plus" viewBox="0 0 10 10" overflow="visible"><path d="M2,5 L8,5 M5,2 L5,8" fill="none" stroke="#d8d8d8" stroke-width="1.1"/></symbol>
</defs>
<!-- tab icons -->
<g stroke="#d0d0d0" stroke-width="1.1" fill="none"><path d="M102.6,389.8 L105.6,389.8 M110.8,389.8 L117.4,389.8 M102.6,394 L110.4,394 M115.6,394 L117.4,394"/></g>
<circle cx="108.2" cy="389.8" r="1.9" fill="#d0d0d0"/><circle cx="113" cy="394" r="1.9" fill="#d0d0d0"/>
<g fill="none" stroke="#707174" stroke-width="1" stroke-linecap="round" stroke-linejoin="round"><path d="M209.6,395.8 Q206.4,395.4 206.6,392.4 Q207,389.8 209.8,389.8 Q211,386.6 214.8,386.8 Q218.4,387 219.4,390 Q222.6,390.4 222.6,393.2 Q222.6,395.4 220.4,395.8"/><path d="M209.6,392.8 L219.6,392.8 M217.4,390.6 L219.8,392.8 L217.4,395 M211.8,390.8 L209.6,392.8 L211.8,395"/></g>
<!-- lock open -->
<rect x="252.8" y="425" width="8.4" height="5.6" rx="0.8" fill="#e0e0e0"/>
<path d="M250.8,424 L250.8,422.6 Q250.8,420.2 253.2,420.2 Q255.6,420.2 255.6,422.6 L255.6,425" fill="none" stroke="#e0e0e0" stroke-width="1.1"/>
<!-- checks -->
<use href="#chk" x="91.2" y="446.6" width="13" height="13"/>
<use href="#chk" x="91.2" y="472.2" width="13" height="13"/>
<use href="#chk" x="91.2" y="551" width="13" height="13"/>
<use href="#plus" x="80" y="526" width="10" height="10"/>
<use href="#plus" x="80" y="552" width="10" height="10"/>
<!-- chevron > -->
<path d="M253.6,474 L258,478.5 L253.6,483" fill="none" stroke="#d0d0d0" stroke-width="1.1" stroke-linecap="round" stroke-linejoin="round"/>
<use href="#updn" x="237.2" y="499.6" width="7.4" height="12" style="color:#cfcfcf"/>
<!-- ref icons -->
<use href="#stack" x="170" y="550" width="12.6" height="15" style="color:#b6b4a2"/>
<g fill="none" stroke="#cdcdcd" stroke-width="1" stroke-linecap="round" stroke-linejoin="round">
<path d="M195.6,557 L194.2,563.8 L200.4,563.8 L199,557 Z" fill="#cdcdcd" stroke="none"/>
<rect x="195.4" y="553" width="3.8" height="3.4" rx="0.6"/>
<path d="M195.8,552.8 L197.3,551.2 L198.8,552.8"/>
<path d="M194.8,554 L190.8,552.2 M194.8,555.4 L190.8,557 M199.8,554 L203.8,552.2 M199.8,555.4 L203.8,557" stroke-width="0.9"/>
<rect x="211.4" y="551.2" width="13.2" height="12.6" rx="2"/>
<path d="M215,557 L217.6,560 L222.2,554" stroke-width="1.2"/>
<path d="M211.6,560.4 L215,563.6" stroke-width="0.9"/>
</g>
<path d="M232.4,562.8 L232.4,552 Q232.4,551.2 233.2,551.2 L237.2,551.2 L238.6,553 L245,553 Q245.8,553 245.8,553.8 L245.8,562.8 Z" fill="#c4c4c4"/>
<path d="M232.6,554.6 L245.6,554.6" stroke="#575757" stroke-width="0.7"/>
<use href="#updn" x="252.2" y="551.2" width="7.4" height="13.2" style="color:#cfcfcf"/>
<!-- reset + wrench -->
<g fill="none" stroke="#c6c6c6" stroke-width="1" stroke-linecap="round">
<path d="M232.4,574.8 A6.5,6.5 0 1 1 226.4,578.8"/>
<path d="M227,577.4 A6.5,6.5 0 0 1 231,575" stroke-dasharray="1 1.4"/>
<path d="M232.4,575 L232.4,581"/>
</g>
<circle cx="232.4" cy="581.3" r="1.6" fill="#c6c6c6"/>
<path d="M262.8,586.8 L257.6,581.6 Q255.2,582.6 253.4,580.8 Q251.8,579 252.8,576.6 L255.4,579.2 L257.4,577.2 L254.8,574.6 Q257.2,573.8 259,575.6 Q260.6,577.4 259.6,579.6 L264.8,584.8 Q265,586.8 262.8,586.8 Z" fill="none" stroke="#c6c6c6" stroke-width="1.1" stroke-linejoin="round"/>
<!-- color panel tab icons -->
<circle cx="110.3" cy="610.4" r="5.8" fill="none" stroke="#cfcfcf" stroke-width="1"/>
<rect x="107.8" y="607.9" width="5" height="5" rx="1" fill="#cfcfcf"/>
<g fill="#6c6d70">
<rect x="194.4" y="604.6" width="12.8" height="9"/><rect x="222.8" y="604.6" width="13.2" height="9"/>
<path d="M251.8,613.6 L255.4,605.2 L258.4,610.2 L261.2,605.2 L265,613.6 Z"/>
</g>
<g fill="#46474a"><rect x="196" y="606.2" width="4.4" height="3"/><rect x="201.6" y="606.2" width="4.2" height="3"/><rect x="196" y="610.4" width="2.6" height="3.2"/><rect x="200" y="610.4" width="2.6" height="3.2"/><rect x="204" y="610.4" width="2" height="3.2"/>
<rect x="226" y="606" width="6.8" height="2.6"/><rect x="226" y="610" width="6.8" height="3.6"/></g>
<!-- play -->
<circle cx="255.9" cy="752.8" r="6.8" fill="none" stroke="#bebebe" stroke-width="1"/>
<path d="M253.4,748.6 L260.2,752.8 L253.4,757 Z" fill="none" stroke="#bebebe" stroke-width="1" stroke-linejoin="round"/>
<!-- tool panel 2 tab icon -->
<g stroke="#c4c4c4" stroke-width="1.2" fill="none"><path d="M33.6,552.4 L33.6,566.6 M39.2,552.4 L39.2,566.6"/></g>
<rect x="32" y="558.4" width="3.2" height="4.4" rx="1.4" fill="#c4c4c4"/><rect x="37.6" y="554.4" width="3.2" height="4.4" rx="1.4" fill="#c4c4c4"/>
</svg>
<svg id="ic-status" width="1024" height="42" viewBox="0 0 1024 42" style="left:0;top:0;pointer-events:none">
<!-- CSP logo -->
<path d="M26.8,28.2 L23,29.7 Q18.8,30.2 19,27.2 Q19.8,24.4 25,23.7 Q31.6,23.2 32,27.4 Q32,31.2 25,34.2 L27.2,37.2" fill="none" stroke="#c8c8c8" stroke-width="2.5" stroke-linecap="round" stroke-linejoin="round"/>
<!-- wifi -->
<g fill="none" stroke="#f2f2f2" stroke-linecap="round">
<path d="M933.7,8 Q939.1,2.8 944.5,8" stroke-width="2"/>
<path d="M936,10.6 Q939.1,7.6 942.2,10.6" stroke-width="1.9"/>
</g>
<circle cx="939.1" cy="12.6" r="1.3" fill="#f2f2f2"/>
<!-- orientation lock -->
<path d="M959.4,7.4 A4.5,4.5 0 1 0 959.6,10.6" fill="none" stroke="#ececec" stroke-width="1.1"/>
<path d="M957.4,6.6 L960.4,6 L960,9 Z" fill="#ececec"/>
<rect x="953.4" y="8.6" width="3.6" height="3" rx="0.6" fill="#ececec"/>
<path d="M954.2,8.8 L954.2,8 Q954.2,7 955.2,7 Q956.2,7 956.2,8 L956.2,8.8" fill="none" stroke="#ececec" stroke-width="0.7"/>
<!-- battery -->
<rect x="994.9" y="4.8" width="21.8" height="9.6" rx="2.8" fill="none" stroke="#a2a2a2" stroke-width="1"/>
<rect x="996.5" y="6.3" width="5.4" height="6.6" rx="1.2" fill="#fff"/>
<path d="M1018.2,8 Q1019.6,9.6 1018.2,11.2 Z" fill="#a2a2a2"/>
</svg>

</body>
</html>
